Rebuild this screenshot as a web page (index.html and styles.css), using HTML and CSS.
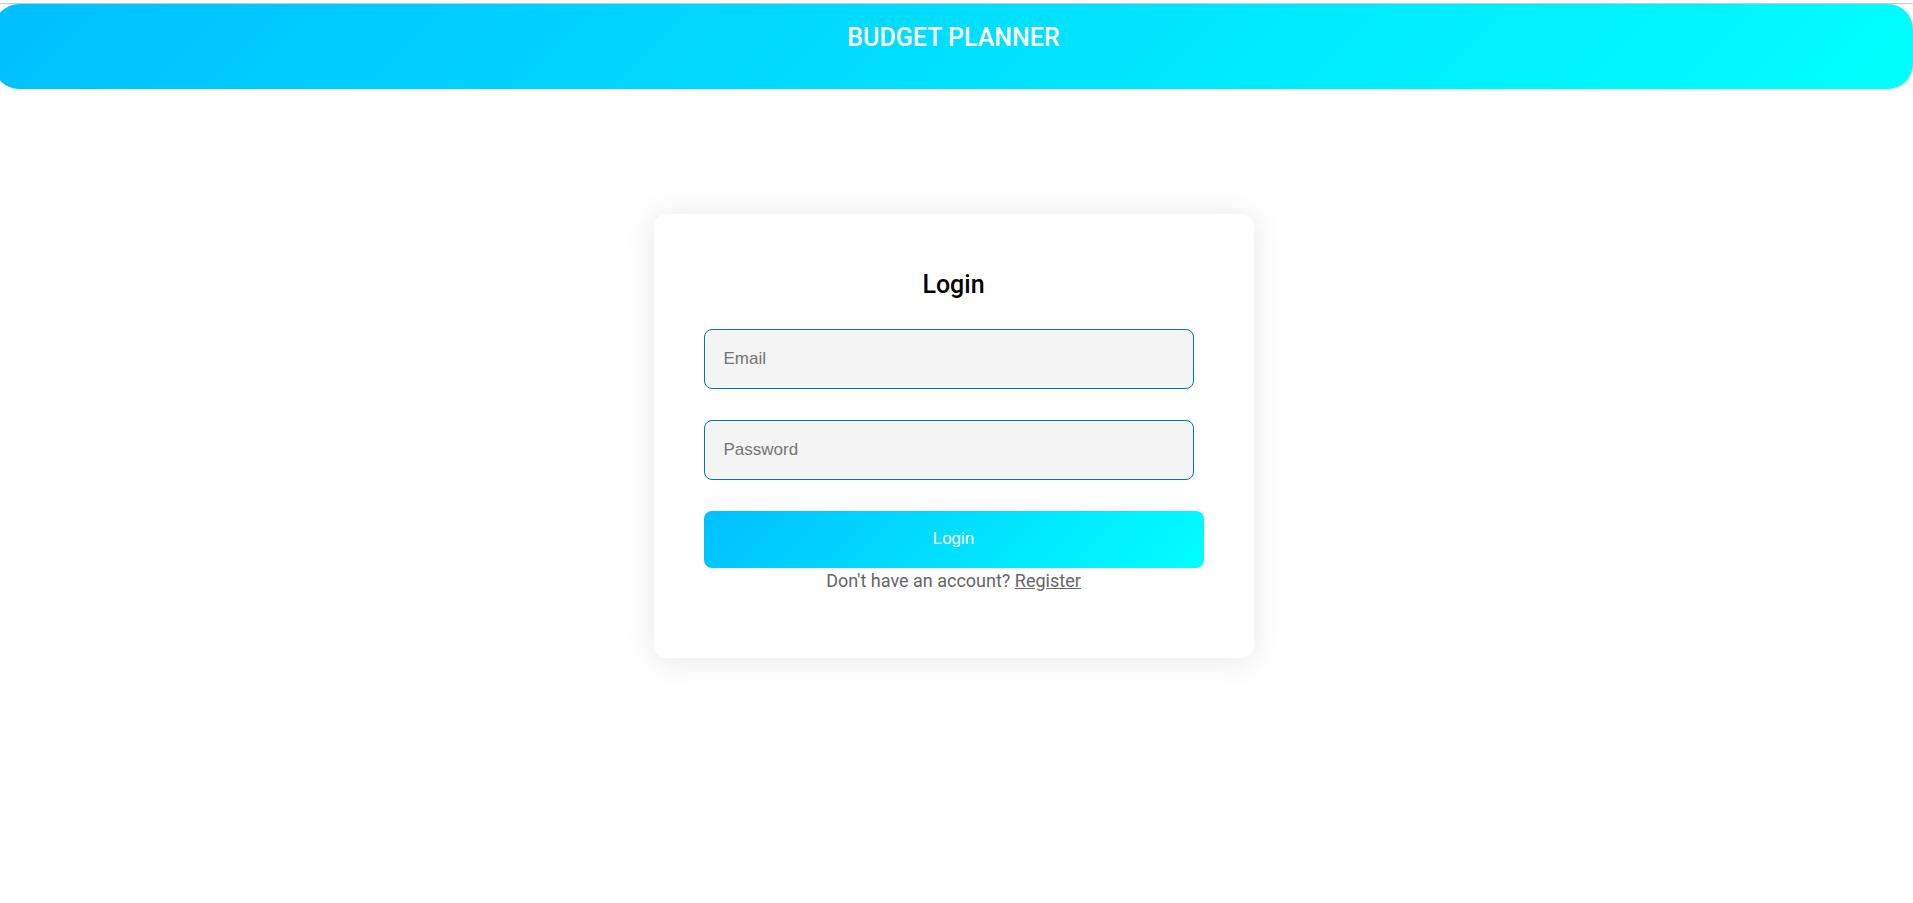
FILE: index.html
```
<!DOCTYPE html>
<html lang="en">
<head>
<meta charset="utf-8">
<title>Budget Planner</title>
<link rel="stylesheet" href="styles.css">
</head>
<body>
<hr class="rule">
<header class="header"><h1 class="title">BUDGET PLANNER</h1></header>
<main class="main">
<form class="card">
<h2 class="heading">Login</h2>
<input class="field" type="email" placeholder="Email" aria-label="Email">
<input class="field" type="password" placeholder="Password" aria-label="Password">
<button class="submit" type="submit">Login</button>
<p class="note">Don't have an account? <a class="link" href="#">Register</a></p>
</form>
</main>
</body>
</html>
```
FILE: styles.css
```
* {
  box-sizing: border-box;
}

html {
  background: #fff;
}

body {
  min-height: 100vh;
  margin: 0 0 0 -6px;
  padding-top: 3px;
  font-family: Roboto, sans-serif;
}

.rule {
  height: 1px;
  margin: 0;
  border: 0;
  background: #c8c8c8;
}

.header {
  height: 85px;
  padding-top: 19px;
  border-radius: 25px;
  background: linear-gradient(135deg, deepskyblue, aqua);
}

.title {
  margin: 0;
  color: #fff;
  font-size: 25px;
  font-weight: 500;
  line-height: 30px;
  text-align: center;
}

.main {
  display: flex;
  justify-content: center;
  padding: 125px 0 50px;
}

.card {
  display: flex;
  flex-direction: column;
  width: 600px;
  padding: 50px 50px 64px;
  border-radius: 13px;
  background: #fff;
  box-shadow: 0 2px 32px rgba(0, 0, 0, 0.1);
}

.heading {
  margin: 0 0 24px;
  color: #000;
  font-size: 25px;
  font-weight: 500;
  line-height: 41px;
  text-align: center;
}

.field {
  width: 98%;
  height: 60px;
  margin: 0 0 31px;
  padding: 0 19px;
  border: 1px solid teal;
  border-radius: 8px;
  background: #f4f4f4;
  font: 17px "Liberation Sans", Arial, sans-serif;
}

.submit {
  height: 57px;
  padding: 0 0 2px;
  border: 0;
  border-radius: 8px;
  background: linear-gradient(135deg, deepskyblue, aqua);
  color: #fff;
  font: 17px "Liberation Sans", Arial, sans-serif;
  cursor: pointer;
}

.note {
  margin: 0;
  color: #666;
  font-size: 18px;
  line-height: 26px;
  text-align: center;
}

.link {
  color: inherit;
}
```
